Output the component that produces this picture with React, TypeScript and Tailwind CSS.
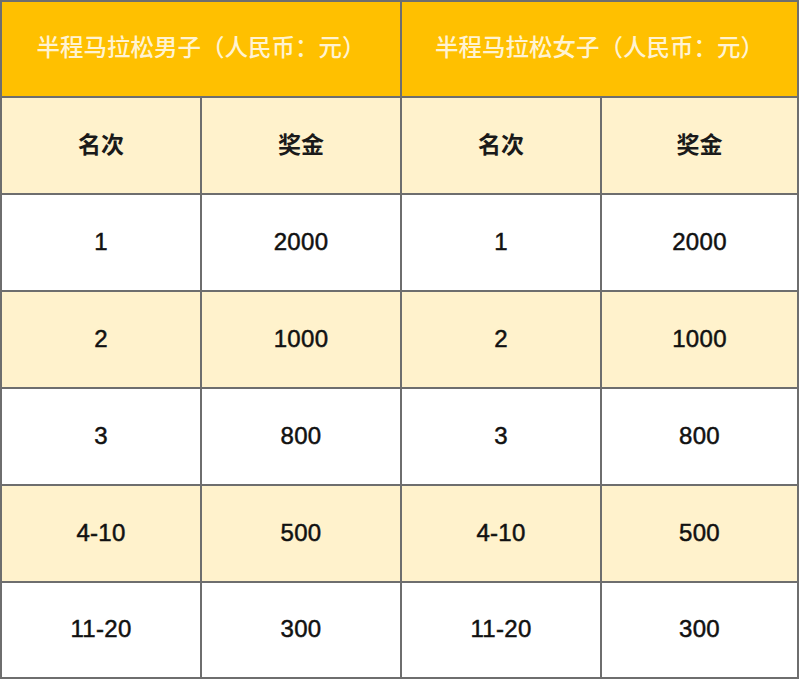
const rows = [
  { rank: '1', prize: '2000' },
  { rank: '2', prize: '1000' },
  { rank: '3', prize: '800' },
  { rank: '4-10', prize: '500' },
  { rank: '11-20', prize: '300' },
];

const font = { fontFamily: '"Noto Sans CJK SC", "Liberation Sans", sans-serif' };

const Cell = ({ children, className = '' }: { children: React.ReactNode; className?: string }) => (
  <div className={`flex items-center justify-center border-r-2 border-b-2 border-[#6e6e6e] ${className}`}>
    {children}
  </div>
);

export default function App() {
  return (
    <div className="w-[800px] h-[680px] bg-white" style={font}>
      <div className="w-[799px] border-l-2 border-t-2 border-[#6e6e6e] grid grid-cols-[200px_200px_200px_197px]">
        <Cell className="col-span-2 h-[96px] pb-[5px] bg-[#ffc000] text-[#fff3d2] text-[23.5px] font-medium">
          半程马拉松男子（人民币：元）
        </Cell>
        <Cell className="col-span-2 h-[96px] pb-[5px] bg-[#ffc000] text-[#fff3d2] text-[23.5px] font-medium">
          半程马拉松女子（人民币：元）
        </Cell>
        {['名次', '奖金', '名次', '奖金'].map((t, i) => (
          <Cell key={i} className="h-[97px] pb-[4px] bg-[#fff2cc] text-[23px] font-bold text-[#1a1a1a]">
            {t}
          </Cell>
        ))}
        {rows.map((r, i) => {
          const bg = i % 2 === 1 ? 'bg-[#fff2cc]' : 'bg-white';
          const h = i === 4 ? 'h-[96px]' : 'h-[97px]';
          return [r.rank, r.prize, r.rank, r.prize].map((t, j) => (
            <Cell
              key={`${i}-${j}`}
              className={`${h} ${bg} pb-[2px] font-['Liberation_Sans',sans-serif] text-[24px] tracking-[0.3px] text-[#111] [-webkit-text-stroke:0.5px_#111]`}
            >
              {t}
            </Cell>
          ));
        })}
      </div>
    </div>
  );
}
